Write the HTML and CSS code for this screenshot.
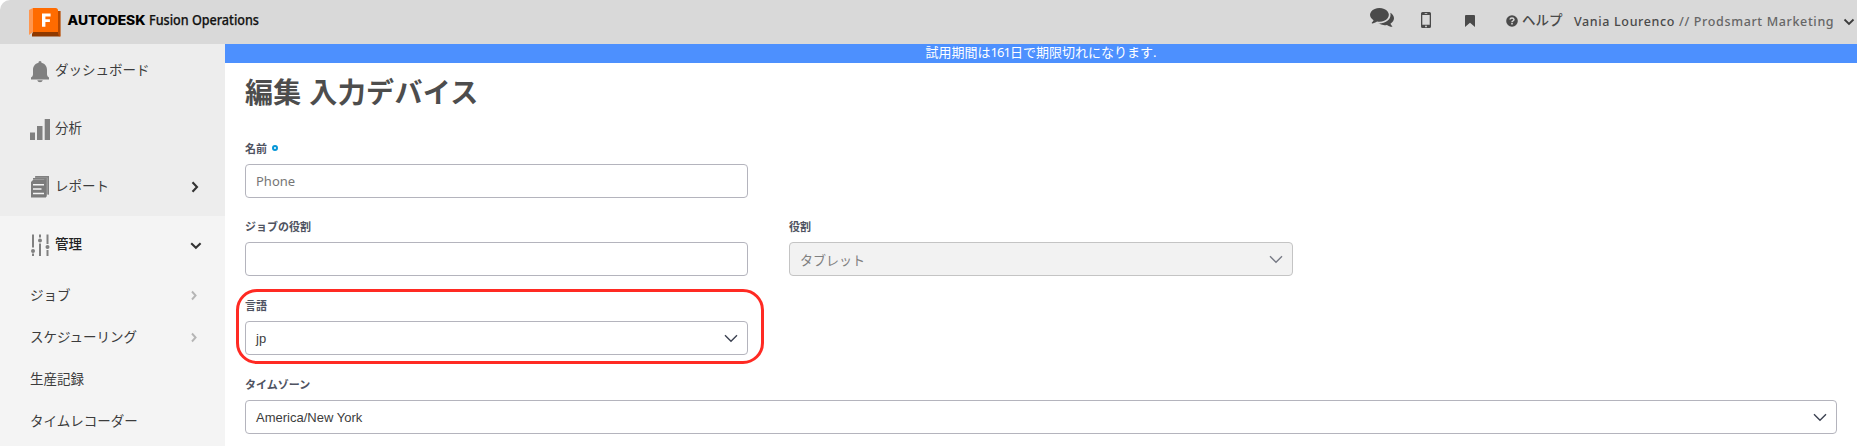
FILE: index.html
```html
<!DOCTYPE html>
<html lang="ja">
<head>
<meta charset="utf-8">
<title>Fusion Operations</title>
<link rel="stylesheet" href="styles.css">
</head>
<body>
<header class="topbar">
  <div class="brand">
    <svg class="logo" width="33" height="30" viewBox="0 0 33 30">
      <path fill="#ff9750" d="M0 2 4 0v24L0 27z"/>
      <path fill="#8f3900" d="M4 24h24l2.500-19.500V28.600H3L3 26z"/>
      <path fill="#b84a00" d="M29 3h2.600v25.600H30l-1-3z"/>
      <path fill="#ff6b00" d="M4 0h22.500a2.500 2.500 0 0 1 2.500 2.500V24H4z"/>
      <path fill="#fff" d="M13 5.500h8.600v2.900h-5.200v2.800h4.500v2.700h-4.500v4.800H13z"/>
    </svg>
    <svg class="wordmark" width="200" height="26" viewBox="0 0 200 26">
      <text class="wm-bold" x="-.5" y="17.500" textLength="78" lengthAdjust="spacingAndGlyphs">AUTODESK</text>
      <text class="wm-name" x="81" y="17.800" textLength="110" lengthAdjust="spacingAndGlyphs">Fusion Operations</text>
    </svg>
  </div>
  <div class="tools">
    <svg class="chat" width="24" height="19" viewBox="0 256 1792 1419" fill="#4a4a4a"><path d="M1408 768q0 139-94 257t-256.500 186.500-353.500 68.500q-86 0-176-16-124 88-278 128-36 9-86 16h-3q-11 0-20.500-8t-11.500-21q-1-3-1-6.500t.5-6.500 2-6l2.500-5 3.500-5.500 4-5 4.500-5 4-4.500q5-6 23-25t26-29.500 22.500-29 25-38.500 20.500-44q-124-72-195-177t-71-224q0-139 94-257t256.500-186.500 353.500-68.500 353.500 68.500 256.500 186.500 94 257zm384 256q0 120-71 224.500t-195 176.500q10 24 20.500 44t25 38.500 22.500 29 26 29.500 23 25q1 1 4 4.500t4.500 5 4 5 3.500 5.500l2.500 5 2 6 .5 6.500-1 6.500q-3 14-13 22t-22 7q-50-7-86-16-154-40-278-128-90 16-176 16-271 0-472-132 58 4 88 4 161 0 309-45t264-129q125-92 192-212t67-254q0-77-23-152 129 71 204 178t75 230z"/></svg>
    <svg class="phone" width="10" height="16" viewBox="0 0 10 16"><path fill="#4a4a4a" fill-rule="evenodd" d="M1.500 0h7A1.500 1.500 0 0 1 10 1.500v13A1.500 1.500 0 0 1 8.500 16h-7A1.500 1.500 0 0 1 0 14.500v-13A1.500 1.500 0 0 1 1.500 0zM1.300 3v9.700h7.400V3zM3.700 1.200v.7h2.600v-.7zM5 13.500a.9.9 0 1 0 0 1.800.9.9 0 0 0 0-1.800z"/></svg>
    <svg class="bookmark" width="10" height="12" viewBox="0 0 10 12"><path fill="#4a4a4a" d="M1 0h8a1 1 0 0 1 1 1v11L5 7.800 0 12V1a1 1 0 0 1 1-1z"/></svg>
    <svg class="question" width="12" height="12" viewBox="0 0 12 12"><circle cx="6" cy="6" r="5.800" fill="#4a4a4a"/><path d="M4 4.500Q4.200 3 6 3t2 1.500Q8 5.300 7 5.900 6 6.400 6 7.200" fill="none" stroke="#d9d9d9" stroke-width="1.500"/><path fill="#d9d9d9" d="M5.200 8h1.600v1.500H5.200z"/></svg>
    <span class="help">ヘルプ</span>
    <span class="user">Vania Lourenco <span class="org">// Prodsmart Marketing</span></span>
    <svg class="user-arrow" width="12" height="8" viewBox="0 0 12 8"><path d="M1.500 1.500 6 6l4.500-4.500" fill="none" stroke="#3c3c3c" stroke-width="1.800"/></svg>
  </div>
</header>
<div class="layout">
  <nav class="sidebar">
    <div class="group">
      <a class="item first"><svg width="20" height="22" viewBox="0 0 20 22" fill="#808080"><path d="M10 0a1.500 1.500 0 0 1 1.500 1.700C15.200 2.500 17 5.500 17 9v4.500q0 2 2 3V18.500H1V16.500q2-1 2-3V9c0-3.500 1.800-6.500 5.500-7.300A1.500 1.500 0 0 1 10 0zM7.200 19.300h5.600Q12.300 21.300 10 21.300T7.200 19.300z"/></svg><span>ダッシュボード</span></a>
      <a class="item"><svg width="20" height="22" viewBox="0 0 20 22" fill="#808080"><path d="M0 14.500h5V22H0zM7 8h5.500v14H7zM14.700 1H20v21h-5.300z"/></svg><span>分析</span></a>
      <a class="item"><svg width="20" height="22" viewBox="0 0 20 22"><path fill="#a0a0a0" d="M5 0h14v18.500h-2.500V21H14V3H3V2h2z"/><path fill="#808080" d="M5.500 0H19v18.500h-1.200V1.500H5.500zM3 2h13.700v18.500h-1.200V3.500H3z"/><path fill="#7b7b7b" d="M1 6l2.500-2.500H16V21.500H1z"/><path d="M3 8.700h11M3 13h8.500M3 17.500h11" stroke="#f4f4f4" stroke-width="1.500"/></svg><span>レポート</span>
        <svg class="arrow" width="12" height="14" viewBox="0 0 12 14"><path d="M1.500 2.200 6 7l-4.500 4.800" fill="none" stroke="#333" stroke-width="2.100"/></svg></a>
    </div>
    <a class="item active"><svg width="20" height="22" viewBox="0 0 20 22" fill="none" stroke="#808080" stroke-width="2"><path d="M3 .5v13M3 19.500V22M10 .5v3M10 9.500V22M17.500 .5v9.500M17.500 16V22"/><g fill="#808080" stroke="none"><circle cx="3" cy="17" r="2"/><circle cx="10" cy="6.500" r="2"/><circle cx="17.500" cy="13" r="2"/></g></svg><span>管理</span>
      <svg class="arrow" width="12" height="14" viewBox="0 0 12 14"><path d="M.2 5.300l4.700 4.500 4.700-4.500" fill="none" stroke="#333" stroke-width="2.100"/></svg></a>
    <a class="sub"><span>ジョブ</span><svg class="arrow" width="12" height="14" viewBox="0 0 12 14"><path d="M1 3.500l3.600 4L1 11.500" fill="none" stroke="#b5b5b5" stroke-width="1.900"/></svg></a>
    <a class="sub"><span>スケジューリング</span><svg class="arrow" width="12" height="14" viewBox="0 0 12 14"><path d="M1 3.500l3.600 4L1 11.500" fill="none" stroke="#b5b5b5" stroke-width="1.900"/></svg></a>
    <a class="sub"><span>生産記録</span></a>
    <a class="sub"><span>タイムレコーダー</span></a>
  </nav>
  <main class="content">
    <div class="banner">試用期間は<span class="days">161</span>日で期限切れになります.</div>
    <h1>編集 入力デバイス</h1>
    <form class="form">
      <div class="field"><label>名前 <i class="required"></i></label><div class="control placeholder">Phone</div></div>
      <div class="field row2"><label>ジョブの役割</label><div class="control"></div></div>
      <div class="field row2"><label>役割</label><div class="control disabled">タブレット<svg width="14" height="9" viewBox="0 0 14 9"><path d="M1 1.200l6 6 6-6"/></svg></div></div>
      <div class="field highlighted"><label>言語</label><div class="control">jp<svg width="14" height="9" viewBox="0 0 14 9"><path d="M1 1.200l6 6 6-6"/></svg></div><div class="marker"></div></div>
      <div class="field wide"><label>タイムゾーン</label><div class="control">America/New York<svg width="14" height="9" viewBox="0 0 14 9"><path d="M1 1.200l6 6 6-6"/></svg></div></div>
    </form>
  </main>
</div>
</body>
</html>
```
FILE: styles.css
```css
* { box-sizing: border-box; }
body {
  margin: 0;
  height: 446px;
  overflow: hidden;
  background: #fff;
  color: #3c3c3c;
  font-family: "Noto Sans", "Noto Sans CJK JP", sans-serif;
}
svg { flex: none; display: block; overflow: visible; }

.topbar {
  display: flex;
  justify-content: space-between;
  height: 44px;
  padding-left: 29px;
  background: #d9d9d9;
  border-top-left-radius: 10px;
}
.brand { display: flex; }
.logo { margin-top: 8px; }
.wordmark { margin: 7px 0 0 6px; }
.wm-bold { font: 800 12.800px Inter, sans-serif; fill: #000; }
.wm-name { font: 500 14px "Noto Sans", sans-serif; fill: #111; stroke: #111; stroke-width: .25; }
.tools { display: flex; align-items: flex-start; padding-right: 2px; color: #4a4a4a; }
.chat { margin: 8px 27px 0 0; }
.phone { margin: 12px 34px 0 0; }
.bookmark { margin: 15px 31px 0 0; }
.question { margin: 15px 4px 0 0; }
.help { width: 40px; margin: 10px 11px 0 0; font-size: 13.500px; font-weight: 500; line-height: 20px; white-space: nowrap; }
.user { width: 260px; margin: 12px 0 0 1px; font-size: 12.500px; font-weight: 500; line-height: 20px; letter-spacing: .64px; white-space: nowrap; }
.org { color: #666; }
.user-arrow { margin: 18px 0 0 9px; }

.layout { display: flex; height: 402px; }
.sidebar { width: 225px; flex: none; background: #f4f4f4; font-size: 13.500px; }
.group { background: #ededed; }
.item { display: flex; align-items: center; height: 58px; padding: 0 22px 0 30px; }
.item.first { height: 56px; }
.item span { margin: -3px 0 0 5px; line-height: 20px; }
.item.first span { margin-top: -5px; }
.active span { font-weight: 500; color: #222; }
.arrow { margin-left: auto; }
.sub { display: flex; align-items: center; height: 42px; padding: 0 22px 0 30px; }
.sub span { margin-top: -2px; }

.content { flex: 1; min-width: 0; }
.banner { height: 19px; background: #4d90fe; color: #fff; font-size: 13px; line-height: 17px; text-align: center; }
.days { letter-spacing: -1px; }
h1 { margin: 9px 0 24px 20px; height: 40px; font-size: 28px; line-height: 41px; font-weight: 700; letter-spacing: .35px; color: #4d4d4d; }
.form { display: grid; grid-template-columns: 503px 504px; column-gap: 41px; margin-left: 20px; }
.field { position: relative; }
.field:first-child { grid-column: 1 / 3; width: 503px; }
.row2 { margin-top: 16px; }
.highlighted { margin-top: 17px; grid-column: 1; }
.wide { margin-top: 17px; grid-column: 1 / 3; width: 1592px; }
label { display: flex; align-items: center; gap: 5px; height: 24px; margin-bottom: 4px; font-size: 11px; font-weight: 700; color: #4f5361; }
.required { width: 6px; height: 6px; border: 2px solid #0696d7; border-radius: 50%; }
.control {
  display: flex;
  align-items: center;
  justify-content: space-between;
  height: 34px;
  padding: 0 9px 0 10px;
  border: 1px solid #b4b4bd;
  border-radius: 4px;
  font: 13px "Liberation Sans", "Noto Sans CJK JP", sans-serif;
  color: #3c3c3c;
}
.control svg { fill: none; stroke: #3c4252; stroke-width: 1.400; }
.placeholder { font-family: "Noto Sans", sans-serif; color: #767676; }
.disabled { background: #f2f2f2; border-color: #c4c4c4; color: #808080; }
.disabled svg { stroke: #777a85; }
.marker { position: absolute; left: -9px; top: -4px; width: 528px; height: 75px; border: 3px solid #ff2a23; border-radius: 21px; }
```
